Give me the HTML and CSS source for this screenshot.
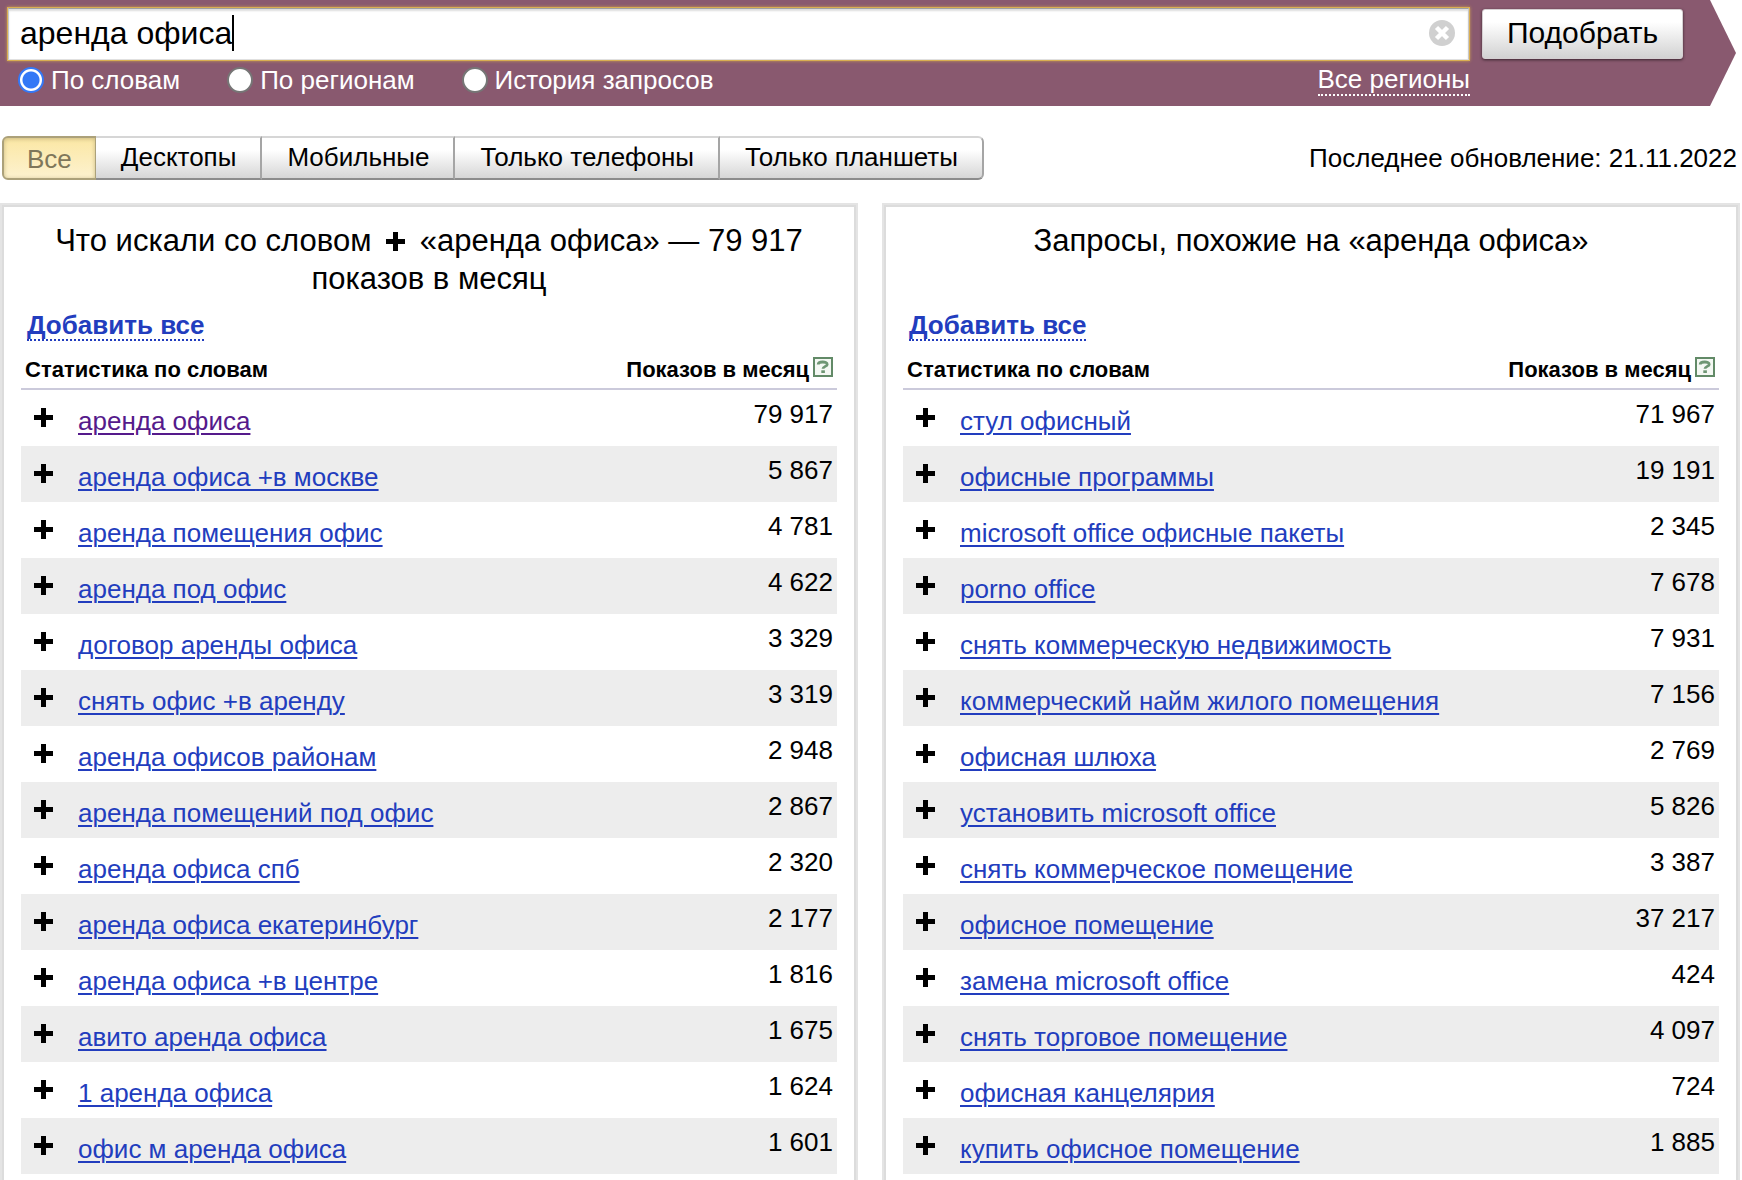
FILE: index.html
```html
<!DOCTYPE html>
<html lang="ru">
<head>
<meta charset="utf-8">
<meta name="viewport" content="width=device-width, initial-scale=1">
<title>Подбор слов</title>
<link rel="stylesheet" href="styles.css">
</head>
<body>
<svg class="defs" aria-hidden="true">
  <symbol id="plus" viewBox="0 0 19 19"><path d="M7 0h5v7h7v5h-7v7H7v-7H0V7h7z"/></symbol>
  <symbol id="help" viewBox="0 0 20 20"><path fill="#628a67" d="M0 0h20v20H0z"/><path fill="#f4f8f3" d="M2 2h16v16H2z"/><path fill="none" stroke="#6e9673" stroke-width="2.800" d="M5.200 7.400C5.200 4.400 14.200 4 14.200 7.400c0 2-4.200 2-4.200 4.400"/><path fill="#6e9673" d="M8.300 13.300h3.600v2.700H8.300z"/></symbol>
</svg>

<header class="header">
  <form class="search">
    <div class="field">
      <input class="query" type="text" value="аренда офиса" aria-label="Запрос">
      <span class="caret"></span>
      <button class="clear" type="button" aria-label="Очистить">
        <svg viewBox="0 0 26 26"><circle cx="13" cy="13" r="13" fill="#d0d0d0"/><path d="M7.500 7.500l11 11M18.500 7.500l-11 11" stroke="#fff" stroke-width="4.500"/></svg>
      </button>
    </div>
    <button class="submit" type="submit">Подобрать</button>
    <div class="options">
      <label class="option"><input type="radio" name="mode" checked>По словам</label>
      <label class="option"><input type="radio" name="mode">По регионам</label>
      <label class="option"><input type="radio" name="mode">История запросов</label>
      <a class="regions" href="#">Все регионы</a>
    </div>
  </form>
</header>

<nav class="toolbar">
  <div class="tabs">
    <button class="tab tab-active" type="button">Все</button>
    <button class="tab" type="button">Десктопы</button>
    <button class="tab" type="button">Мобильные</button>
    <button class="tab" type="button">Только телефоны</button>
    <button class="tab" type="button">Только планшеты</button>
  </div>
  <p class="updated">Последнее обновление: 21.11.2022</p>
</nav>

<main class="panels">
  <section class="panel">
    <h2 class="title">Что искали со словом <svg class="title-plus"><use href="#plus"/></svg> «аренда офиса» — 79&nbsp;917<br>показов в месяц</h2>
    <a class="add-all" href="#">Добавить все</a>
    <table class="stats">
      <thead><tr><th colspan="2">Статистика по словам</th><th class="num">Показов в месяц<svg class="help"><use href="#help"/></svg></th></tr></thead>
      <tbody>
        <tr><td class="add"><button type="button" aria-label="Добавить"><svg><use href="#plus"/></svg></button></td><td><a class="visited" href="#">аренда офиса</a></td><td class="num">79 917</td></tr>
        <tr><td class="add"><button type="button" aria-label="Добавить"><svg><use href="#plus"/></svg></button></td><td><a href="#">аренда офиса +в москве</a></td><td class="num">5 867</td></tr>
        <tr><td class="add"><button type="button" aria-label="Добавить"><svg><use href="#plus"/></svg></button></td><td><a href="#">аренда помещения офис</a></td><td class="num">4 781</td></tr>
        <tr><td class="add"><button type="button" aria-label="Добавить"><svg><use href="#plus"/></svg></button></td><td><a href="#">аренда под офис</a></td><td class="num">4 622</td></tr>
        <tr><td class="add"><button type="button" aria-label="Добавить"><svg><use href="#plus"/></svg></button></td><td><a href="#">договор аренды офиса</a></td><td class="num">3 329</td></tr>
        <tr><td class="add"><button type="button" aria-label="Добавить"><svg><use href="#plus"/></svg></button></td><td><a href="#">снять офис +в аренду</a></td><td class="num">3 319</td></tr>
        <tr><td class="add"><button type="button" aria-label="Добавить"><svg><use href="#plus"/></svg></button></td><td><a href="#">аренда офисов районам</a></td><td class="num">2 948</td></tr>
        <tr><td class="add"><button type="button" aria-label="Добавить"><svg><use href="#plus"/></svg></button></td><td><a href="#">аренда помещений под офис</a></td><td class="num">2 867</td></tr>
        <tr><td class="add"><button type="button" aria-label="Добавить"><svg><use href="#plus"/></svg></button></td><td><a href="#">аренда офиса спб</a></td><td class="num">2 320</td></tr>
        <tr><td class="add"><button type="button" aria-label="Добавить"><svg><use href="#plus"/></svg></button></td><td><a href="#">аренда офиса екатеринбург</a></td><td class="num">2 177</td></tr>
        <tr><td class="add"><button type="button" aria-label="Добавить"><svg><use href="#plus"/></svg></button></td><td><a href="#">аренда офиса +в центре</a></td><td class="num">1 816</td></tr>
        <tr><td class="add"><button type="button" aria-label="Добавить"><svg><use href="#plus"/></svg></button></td><td><a href="#">авито аренда офиса</a></td><td class="num">1 675</td></tr>
        <tr><td class="add"><button type="button" aria-label="Добавить"><svg><use href="#plus"/></svg></button></td><td><a href="#">1 аренда офиса</a></td><td class="num">1 624</td></tr>
        <tr><td class="add"><button type="button" aria-label="Добавить"><svg><use href="#plus"/></svg></button></td><td><a href="#">офис м аренда офиса</a></td><td class="num">1 601</td></tr>
      </tbody>
    </table>
  </section>

  <section class="panel">
    <h2 class="title">Запросы, похожие на «аренда офиса»</h2>
    <a class="add-all" href="#">Добавить все</a>
    <table class="stats">
      <thead><tr><th colspan="2">Статистика по словам</th><th class="num">Показов в месяц<svg class="help"><use href="#help"/></svg></th></tr></thead>
      <tbody>
        <tr><td class="add"><button type="button" aria-label="Добавить"><svg><use href="#plus"/></svg></button></td><td><a href="#">стул офисный</a></td><td class="num">71 967</td></tr>
        <tr><td class="add"><button type="button" aria-label="Добавить"><svg><use href="#plus"/></svg></button></td><td><a href="#">офисные программы</a></td><td class="num">19 191</td></tr>
        <tr><td class="add"><button type="button" aria-label="Добавить"><svg><use href="#plus"/></svg></button></td><td><a href="#">microsoft office офисные пакеты</a></td><td class="num">2 345</td></tr>
        <tr><td class="add"><button type="button" aria-label="Добавить"><svg><use href="#plus"/></svg></button></td><td><a href="#">porno office</a></td><td class="num">7 678</td></tr>
        <tr><td class="add"><button type="button" aria-label="Добавить"><svg><use href="#plus"/></svg></button></td><td><a href="#">снять коммерческую недвижимость</a></td><td class="num">7 931</td></tr>
        <tr><td class="add"><button type="button" aria-label="Добавить"><svg><use href="#plus"/></svg></button></td><td><a href="#">коммерческий найм жилого помещения</a></td><td class="num">7 156</td></tr>
        <tr><td class="add"><button type="button" aria-label="Добавить"><svg><use href="#plus"/></svg></button></td><td><a href="#">офисная шлюха</a></td><td class="num">2 769</td></tr>
        <tr><td class="add"><button type="button" aria-label="Добавить"><svg><use href="#plus"/></svg></button></td><td><a href="#">установить microsoft office</a></td><td class="num">5 826</td></tr>
        <tr><td class="add"><button type="button" aria-label="Добавить"><svg><use href="#plus"/></svg></button></td><td><a href="#">снять коммерческое помещение</a></td><td class="num">3 387</td></tr>
        <tr><td class="add"><button type="button" aria-label="Добавить"><svg><use href="#plus"/></svg></button></td><td><a href="#">офисное помещение</a></td><td class="num">37 217</td></tr>
        <tr><td class="add"><button type="button" aria-label="Добавить"><svg><use href="#plus"/></svg></button></td><td><a href="#">замена microsoft office</a></td><td class="num">424</td></tr>
        <tr><td class="add"><button type="button" aria-label="Добавить"><svg><use href="#plus"/></svg></button></td><td><a href="#">снять торговое помещение</a></td><td class="num">4 097</td></tr>
        <tr><td class="add"><button type="button" aria-label="Добавить"><svg><use href="#plus"/></svg></button></td><td><a href="#">офисная канцелярия</a></td><td class="num">724</td></tr>
        <tr><td class="add"><button type="button" aria-label="Добавить"><svg><use href="#plus"/></svg></button></td><td><a href="#">купить офисное помещение</a></td><td class="num">1 885</td></tr>
      </tbody>
    </table>
  </section>
</main>
</body>
</html>
```
FILE: styles.css
```css
* {
  box-sizing: border-box;
}

body {
  margin: 0;
  min-height: 100vh;
  display: flex;
  flex-direction: column;
  background: #fff;
  color: #000;
  font: 26px/30px "Liberation Sans", Arial, sans-serif;
}

button,
input {
  font: inherit;
  color: inherit;
  margin: 0;
}

button {
  cursor: pointer;
}

.defs {
  display: none;
}

/* Search bar with the arrow-shaped right edge */
.header {
  margin-right: 6px;
  padding: 7px 53px 8px 7px;
  background: #89596f;
  clip-path: polygon(0 0, calc(100% - 26px) 0, 100% 50%, calc(100% - 26px) 100%, 0 100%);
}

.search {
  display: grid;
  grid-template-columns: 1fr 201px;
  column-gap: 12px;
}

.field {
  display: flex;
  align-items: center;
  height: 54px;
  padding: 0 13px 2px 11px;
  background: #fff;
  border: 2px solid #c8c8c8;
  border-top-color: #a0a0a0;
  border-bottom-color: #e0e0e0;
  outline: 1px solid #d9ae52;
  outline-offset: -1px;
  box-shadow: 0 0 3px #c99b55, inset 0 2px 2px #ddd;
}

.query {
  field-sizing: content;
  padding: 0;
  border: 0;
  outline: 0;
  background: none;
  font-size: 32px;
  line-height: 36px;
}

.caret {
  width: 2px;
  height: 36px;
  background: #000;
}

.clear {
  display: flex;
  width: 26px;
  height: 26px;
  margin-left: auto;
  padding: 0;
  border: 0;
  background: none;
}

.submit {
  height: 50px;
  margin-top: 2px;
  padding: 0 0 2px;
  border: 1px solid #d5d0d2;
  border-radius: 3px;
  background: linear-gradient(#fff 25%, #d2d2d2);
  box-shadow: 0 1px 3px rgba(0, 0, 0, 0.6);
  font-size: 30px;
}

.options {
  display: flex;
  align-items: center;
  gap: 47px;
  height: 37px;
  padding-left: 11px;
  color: #fff;
}

.option {
  display: flex;
  align-items: center;
  gap: 7px;
}

.option input {
  appearance: none;
  width: 26px;
  height: 26px;
  border: 2px solid #767676;
  border-radius: 50%;
  background: #fff;
}

.option input:checked {
  border-color: #3478f6;
  background: radial-gradient(circle, #3478f6 8px, #fff 9px);
}

.regions {
  margin-left: auto;
  border-bottom: 2px dotted #fff;
  color: #fff;
  text-decoration: none;
}

/* Device tabs */
.toolbar {
  display: flex;
  justify-content: space-between;
  padding: 30px 5px 23px 2px;
}

.tabs {
  display: flex;
}

.tab {
  height: 44px;
  padding: 0 24px 2px 25px;
  border: 2px solid #8c8c8c;
  border-top-color: #d6d6d6;
  border-left: 0;
  border-right-color: #a5a5a5;
  background: linear-gradient(#fff 30%, #d6d6d6);
}

.tab:last-child {
  border-radius: 0 6px 6px 0;
}

.tab-active {
  padding: 2px 23px 0;
  border: 2px solid #aca17a;
  border-right-width: 1px;
  border-radius: 6px 0 0 6px;
  background: linear-gradient(#fbe7a4, #fdf2cf);
  box-shadow: inset 0 1px 4px #c9b982;
  color: #7f775a;
}

.updated {
  margin: 7px 0 0;
}

/* Result panels */
.panels {
  flex: 1;
  display: grid;
  grid-template-columns: 1fr 1fr;
  gap: 24px;
  padding-right: 2px;
}

.panel {
  padding: 17px 19px 6px;
  border: 2px solid #e4e4e4;
  border-bottom: 0;
  box-shadow: inset 2px 0 #dcdcdc, inset -2px 0 #dcdcdc, inset 0 2px #dcdcdc;
}

.title {
  min-height: 76px;
  margin: 0 0 13px;
  font-size: 31px;
  font-weight: normal;
  line-height: 38px;
  text-align: center;
}

.title-plus {
  width: 19px;
  height: 19px;
  margin: 0 6px;
}

.add-all {
  display: block;
  width: fit-content;
  margin-left: 6px;
  border-bottom: 2px dotted #223dbe;
  color: #223dbe;
  font-weight: bold;
  line-height: 28px;
  text-decoration: none;
}

.stats {
  width: 100%;
  margin-top: 15px;
  border-collapse: separate;
  border-spacing: 0;
}

.stats th {
  padding: 0 4px 4px;
  border-bottom: 2px solid #cbcadb;
  font-size: 22px;
  line-height: 28px;
  text-align: left;
}

.stats td {
  height: 56px;
  padding: 16px 0 0;
  vertical-align: top;
}

.stats tbody tr:nth-child(even) {
  background: #ededed;
}

.stats .num {
  text-align: right;
}

.stats td.num {
  padding: 9px 4px 0 0;
}

.stats td.add {
  width: 57px;
  padding: 18px 0 0 13px;
}

.add button {
  display: flex;
  padding: 0;
  border: 0;
  background: none;
}

.add svg {
  width: 19px;
  height: 19px;
}

.help {
  width: 20px;
  height: 20px;
  margin-left: 4px;
}

.stats a {
  color: #223dbe;
  text-decoration-thickness: 2px;
  text-underline-offset: 3px;
}

.stats .visited {
  color: #551a8b;
}
```
